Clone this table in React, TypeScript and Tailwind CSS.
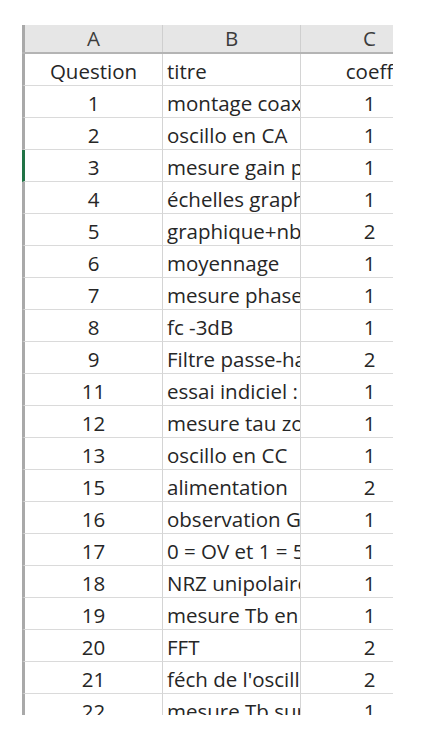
import React from "react";

interface Row {
  q: string;
  titre: string;
  coeff: string;
}

const rows: Row[] = [
  { q: "1", titre: "montage coaxial", coeff: "1" },
  { q: "2", titre: "oscillo en CA", coeff: "1" },
  { q: "3", titre: "mesure gain passe-bas", coeff: "1" },
  { q: "4", titre: "échelles graphique", coeff: "1" },
  { q: "5", titre: "graphique+nb points", coeff: "2" },
  { q: "6", titre: "moyennage", coeff: "1" },
  { q: "7", titre: "mesure phase", coeff: "1" },
  { q: "8", titre: "fc -3dB", coeff: "1" },
  { q: "9", titre: "Filtre passe-haut", coeff: "2" },
  { q: "11", titre: "essai indiciel : tau", coeff: "1" },
  { q: "12", titre: "mesure tau zoom", coeff: "1" },
  { q: "13", titre: "oscillo en CC", coeff: "1" },
  { q: "15", titre: "alimentation", coeff: "2" },
  { q: "16", titre: "observation GBF", coeff: "1" },
  { q: "17", titre: "0 = OV et 1 = 5V", coeff: "1" },
  { q: "18", titre: "NRZ unipolaire", coeff: "1" },
  { q: "19", titre: "mesure Tb en NRZ", coeff: "1" },
  { q: "20", titre: "FFT", coeff: "2" },
  { q: "21", titre: "féch de l'oscillo", coeff: "2" },
  { q: "22", titre: "mesure Tb sur FFT", coeff: "1" },
];

const cell = "h-[32px] border-b border-[#dadada] overflow-hidden whitespace-nowrap pt-[3px] leading-[28px]";

const DataRow: React.FC<{ row: Row; selected?: boolean }> = ({ row, selected }) => (
  <div className="flex">
    <div
      className={`${cell} w-[140px] shrink-0 text-center border-l-[3px] ${
        selected ? "border-l-[#217346]" : "border-l-[#a9a9a9]"
      }`}
    >
      {row.q}
    </div>
    <div className={`${cell} w-[138px] shrink-0 border-l border-l-[#d4d4d4] pl-[4px]`}>{row.titre}</div>
    <div className={`${cell} w-[138px] shrink-0 border-l border-l-[#d4d4d4] text-center`}>{row.coeff}</div>
  </div>
);

export default function App() {
  return (
    <div
      className="w-[428px] h-[746px] bg-white pt-[25px] pl-[22px] text-[#262626] text-[20.5px]"
      style={{ fontFamily: '"Open Sans", "Noto Sans", sans-serif' }}
    >
      <div className="w-[371px] h-[690px] overflow-hidden">
        {/* column letters */}
        <div className="flex h-[29px] bg-[#e6e6e6] border-b-[2px] border-[#b4b4b4] text-[#3c3c3c] leading-[27px]">
          <div className="w-[140px] shrink-0 text-center border-l-[3px] border-l-[#a9a9a9]">A</div>
          <div className="w-[138px] shrink-0 text-center border-l border-l-[#cfcfcf]">B</div>
          <div className="w-[138px] shrink-0 text-center border-l border-l-[#cfcfcf]">C</div>
        </div>

        <DataRow row={{ q: "Question", titre: "titre", coeff: "coeff" }} />
        {rows.map((r) => (
          <DataRow key={r.q} row={r} selected={r.q === "3"} />
        ))}
      </div>
    </div>
  );
}
